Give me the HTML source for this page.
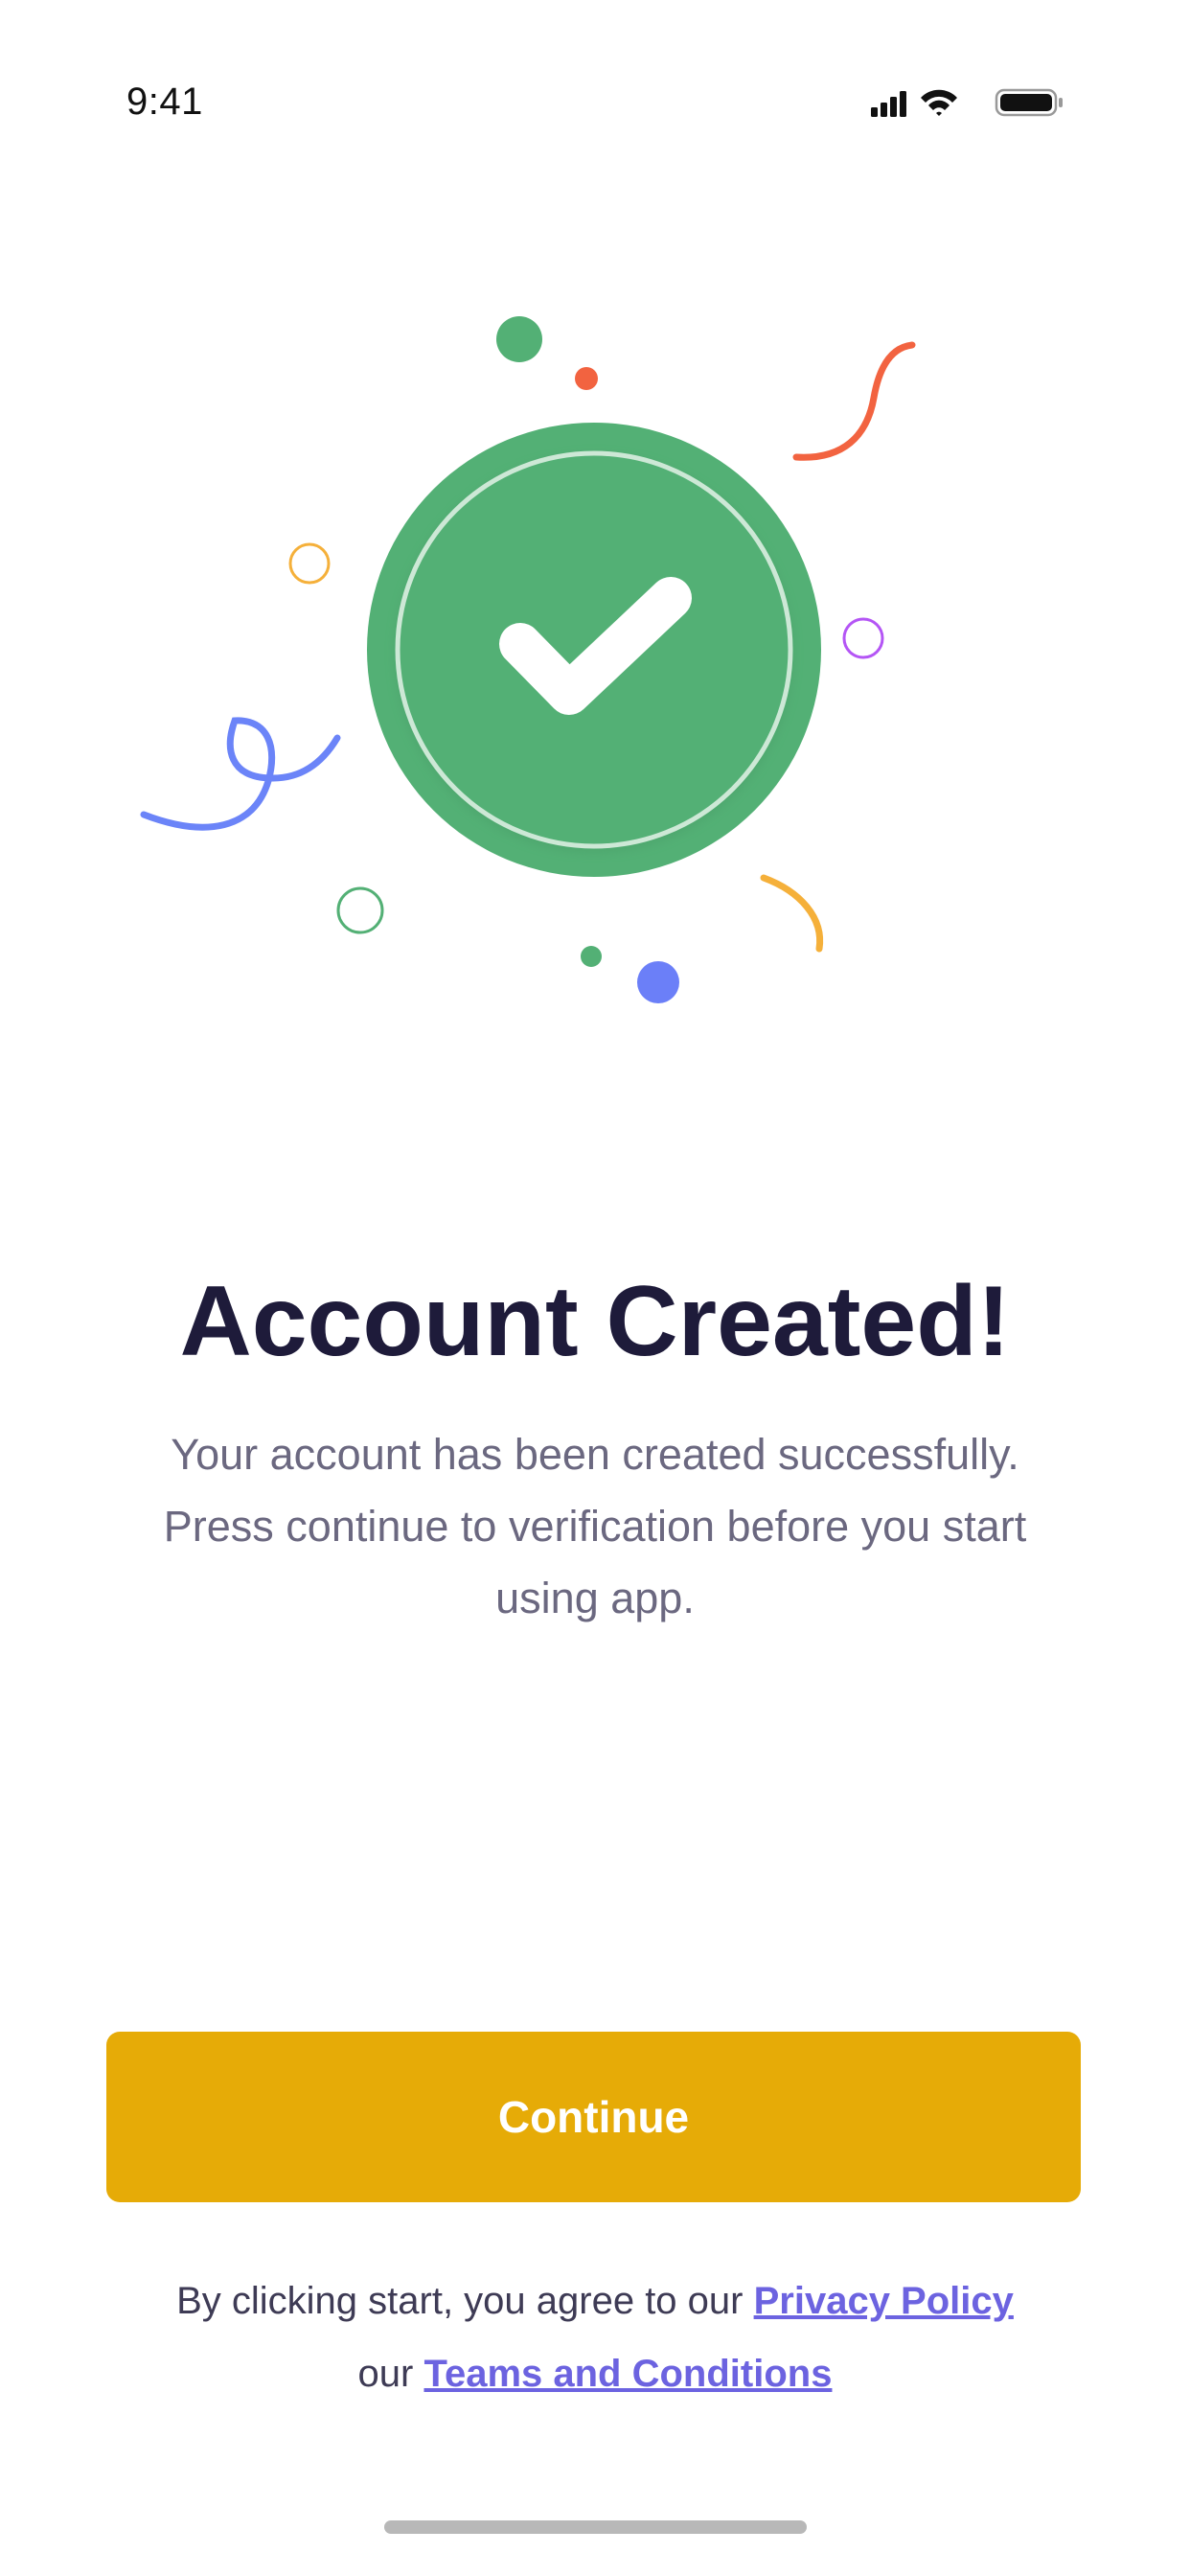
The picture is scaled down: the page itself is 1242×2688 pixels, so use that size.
<!DOCTYPE html>
<html><head><meta charset="utf-8"><style>
html,body{margin:0;padding:0;background:#fff;}
body{width:1242px;height:2688px;position:relative;overflow:hidden;font-family:"Liberation Sans",sans-serif;}
.abs{position:absolute;}
</style></head><body>
<div class="abs" style="left:132px;top:84px;font-size:40px;color:#111;letter-spacing:0.5px;">9:41</div>
<svg class="abs" style="left:905px;top:88px" width="210" height="36" viewBox="0 0 210 36">
 <rect x="4" y="24" width="7" height="10" rx="1.5" fill="#111"/>
 <rect x="14" y="19" width="7" height="15" rx="1.5" fill="#111"/>
 <rect x="24" y="13" width="7" height="21" rx="1.5" fill="#111"/>
 <rect x="34" y="7" width="7" height="27" rx="1.5" fill="#111"/>
 <path d="M56 14 A26 26 0 0 1 94 14 L89 19 A19 19 0 0 0 61 19 Z" fill="#111"/>
 <path d="M64 22 A14 14 0 0 1 86 22 L81 27 A8 8 0 0 0 69 27 Z" fill="#111"/>
 <path d="M72 30 L75 33 L78 30 A4 4 0 0 0 72 30Z" fill="#111"/>
 <rect x="135" y="6" width="62" height="26" rx="8" fill="none" stroke="#999" stroke-width="2.5"/>
 <rect x="139" y="10" width="54" height="18" rx="5" fill="#111"/>
 <rect x="200" y="14" width="4" height="10" rx="2" fill="#999"/>
</svg>
<svg class="abs" style="left:0;top:300px" width="1242" height="800" viewBox="0 300 1242 800">
 <defs><filter id="sh" x="-20%" y="-20%" width="140%" height="140%"><feGaussianBlur stdDeviation="6"/></filter></defs>
 <circle cx="620" cy="678" r="237" fill="#53b075"/>
 <circle cx="620" cy="682" r="206" fill="#3f8f5c" opacity="0.35" filter="url(#sh)"/>
 <circle cx="620" cy="678" r="205" fill="#53b075" stroke="#cde8d6" stroke-width="5"/>
 <path d="M543 672 L594 724 L700 624" fill="none" stroke="#fff" stroke-width="44" stroke-linecap="round" stroke-linejoin="round"/>
 <circle cx="542" cy="354" r="24" fill="#53b075"/>
 <circle cx="612" cy="395" r="12" fill="#f26340"/>
 <path d="M831 477 C880 480 905 455 912 415 C919 375 935 362 952 360" fill="none" stroke="#f26340" stroke-width="7" stroke-linecap="round"/>
 <circle cx="323" cy="588" r="20" fill="none" stroke="#f5b03a" stroke-width="3"/>
 <circle cx="901" cy="666" r="20" fill="none" stroke="#b455f5" stroke-width="3"/>
 <path d="M150 850 C215 875 265 865 280 815 C290 780 280 750 245 752 C235 780 238 812 285 812 C320 812 340 790 352 770" fill="none" stroke="#6b84f8" stroke-width="7" stroke-linecap="round"/>
 <circle cx="376" cy="950" r="23" fill="none" stroke="#53b075" stroke-width="3"/>
 <path d="M797 916 C835 930 860 958 855 990" fill="none" stroke="#f5b03a" stroke-width="7" stroke-linecap="round"/>
 <circle cx="617" cy="998" r="11" fill="#53b075"/>
 <circle cx="687" cy="1025" r="22" fill="#6b7ff8"/>
</svg>
<div class="abs" style="left:0;width:1242px;top:1320px;text-align:center;font-size:104px;font-weight:bold;color:#1e1b3a;">Account Created!</div>
<div class="abs" style="left:0;width:1242px;top:1480px;text-align:center;font-size:45px;line-height:75px;color:#6b6880;">Your account has been created successfully.<br>Press continue to verification before you start<br>using app.</div>
<div class="abs" style="left:111px;top:2120px;width:1017px;height:178px;background:#e6ab07;border-radius:14px;color:#fff;font-weight:bold;font-size:46px;line-height:178px;text-align:center;">Continue</div>
<div class="abs" style="left:0;width:1242px;top:2363px;text-align:center;font-size:40px;line-height:76px;color:#3e3b55;">By clicking start, you agree to our <span style="color:#6c63e0;font-weight:bold;text-decoration:underline;">Privacy Policy </span><br>our <span style="color:#6c63e0;font-weight:bold;text-decoration:underline;">Teams and Conditions</span></div>
<div class="abs" style="left:401px;top:2630px;width:441px;height:14px;border-radius:7px;background:#b8b8b8;"></div>
</body></html>
